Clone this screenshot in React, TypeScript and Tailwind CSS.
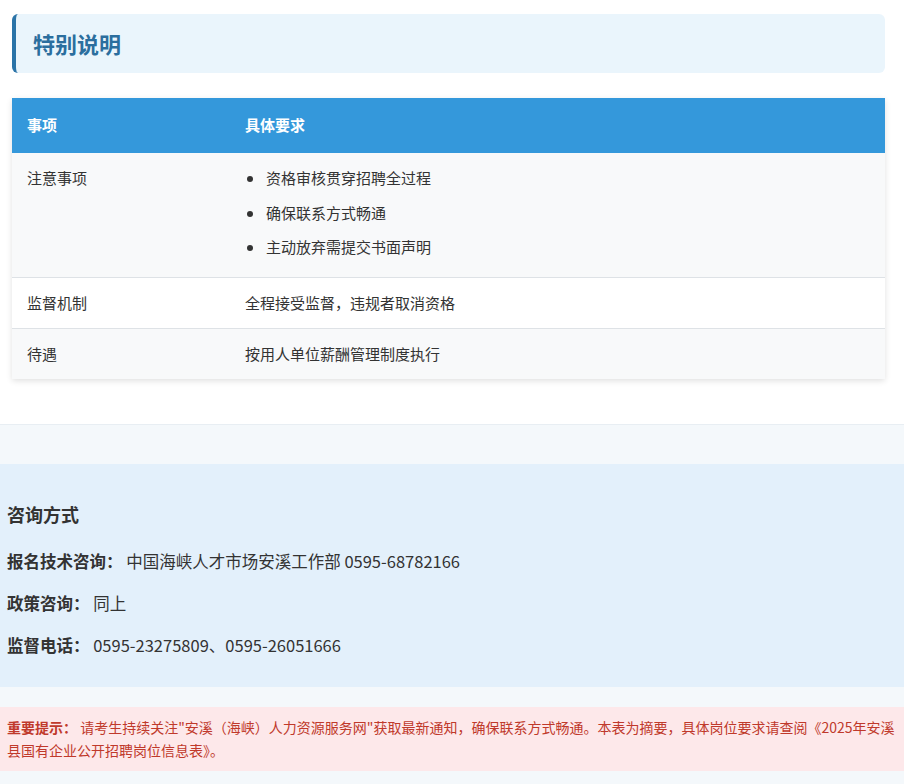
export default function App() {
  const font = { fontFamily: '"Noto Sans CJK SC", "Noto Sans", sans-serif' }
  return (
    <div style={font} className="w-[904px] min-h-[784px] bg-[#f4f8fb] text-[#333]">
      <div className="bg-white pl-3 pr-[19px] pt-[14px] pb-[45px] border-b border-[#e8eef3]">
        <div className="h-[59px] rounded-md bg-[#eaf5fc] border-l-4 border-[#2b74a8] flex items-center pl-[17px]">
          <h2 className="text-[22px] font-bold text-[#2b6e9e]">特别说明</h2>
        </div>
        <div className="mt-[25px] shadow-[0_2px_6px_rgba(0,0,0,0.12)]">
          <div className="flex h-[55px] items-center bg-[#3498db] text-white font-bold text-[15px]">
            <div className="w-[233px] pl-[15px]">事项</div>
            <div>具体要求</div>
          </div>
          <div className="flex bg-[#f8f9fa] text-[15px] pt-[14px] h-[125px] border-b border-[#dee2e6]">
            <div className="w-[233px] pl-[15px]">注意事项</div>
            <ul className="list-disc pl-5 space-y-[12px] marker:text-[#333]">
              <li className="pl-[1px]">资格审核贯穿招聘全过程</li>
              <li className="pl-[1px]">确保联系方式畅通</li>
              <li className="pl-[1px]">主动放弃需提交书面声明</li>
            </ul>
          </div>
          <div className="flex items-center bg-white text-[15px] h-[51px] border-b border-[#dee2e6]">
            <div className="w-[233px] pl-[15px]">监督机制</div>
            <div>全程接受监督，违规者取消资格</div>
          </div>
          <div className="flex items-center bg-[#f8f9fa] text-[15px] h-[50px]">
            <div className="w-[233px] pl-[15px]">待遇</div>
            <div>按用人单位薪酬管理制度执行</div>
          </div>
        </div>
      </div>
      <div className="mt-[39px] bg-[#e3f0fb] px-[7px] pt-[37px] h-[223px]">
        <h3 className="text-[18px] font-bold">咨询方式</h3>
        <div className="mt-[21px] space-y-[17px] text-[16.5px]">
          <p><span className="font-bold">报名技术咨询：</span> 中国海峡人才市场安溪工作部 0595-68782166</p>
          <p><span className="font-bold">政策咨询：</span> 同上</p>
          <p><span className="font-bold">监督电话：</span> 0595-23275809、0595-26051666</p>
        </div>
      </div>
      <div className="mt-[20px] bg-[#fde8ea] px-[7px] py-[9px] text-[14px] leading-[23px] text-[#c0392b]">
        <span className="font-bold">重要提示：</span> 请考生持续关注"安溪（海峡）人力资源服务网"获取最新通知，确保联系方式畅通。本表为摘要，具体岗位要求请查阅《2025年安溪县国有企业公开招聘岗位信息表》。
      </div>
    </div>
  )
}
